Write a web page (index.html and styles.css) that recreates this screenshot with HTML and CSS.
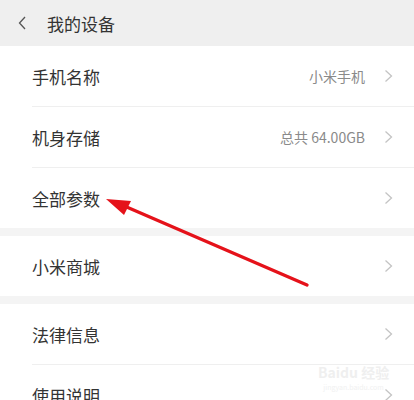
FILE: index.html
```html
<!DOCTYPE html>
<html lang="zh">
<head>
<meta charset="utf-8">
<link rel="stylesheet" href="styles.css">
</head>
<body>
<div class="page">
  <header class="topbar">
    <svg class="back" width="8" height="14" viewBox="0 0 8 14"><path d="M7 1 L1.5 7 L7 13" fill="none" stroke="#555" stroke-width="1.3"/></svg>
    <span class="title">我的设备</span>
  </header>
  <section class="group">
    <div class="row"><span class="label">手机名称</span><span class="value">小米手机</span><svg class="chev" width="9" height="14" viewBox="0 0 9 14"><path d="M1.5 1.5 L7.5 7 L1.5 12.5" fill="none" stroke="#c4c4c4" stroke-width="1.3"/></svg></div>
    <div class="row"><span class="label">机身存储</span><span class="value">总共 64.00GB</span><svg class="chev" width="9" height="14" viewBox="0 0 9 14"><path d="M1.5 1.5 L7.5 7 L1.5 12.5" fill="none" stroke="#c4c4c4" stroke-width="1.3"/></svg></div>
    <div class="row"><span class="label">全部参数</span><span class="value"></span><svg class="chev" width="9" height="14" viewBox="0 0 9 14"><path d="M1.5 1.5 L7.5 7 L1.5 12.5" fill="none" stroke="#c4c4c4" stroke-width="1.3"/></svg></div>
  </section>
  <section class="group">
    <div class="row"><span class="label">小米商城</span><span class="value"></span><svg class="chev" width="9" height="14" viewBox="0 0 9 14"><path d="M1.5 1.5 L7.5 7 L1.5 12.5" fill="none" stroke="#c4c4c4" stroke-width="1.3"/></svg></div>
  </section>
  <section class="group">
    <div class="row"><span class="label">法律信息</span><span class="value"></span><svg class="chev" width="9" height="14" viewBox="0 0 9 14"><path d="M1.5 1.5 L7.5 7 L1.5 12.5" fill="none" stroke="#c4c4c4" stroke-width="1.3"/></svg></div>
    <div class="row"><span class="label">使用说明</span><span class="value"></span><svg class="chev" width="9" height="14" viewBox="0 0 9 14"><path d="M1.5 1.5 L7.5 7 L1.5 12.5" fill="none" stroke="#c4c4c4" stroke-width="1.3"/></svg></div>
  </section>
  <div class="watermark"><div class="wm1">Bai<span>du</span> 经验</div><div class="wm2">jingyan.baidu.com</div></div>
  <svg class="annot" width="414" height="400" viewBox="0 0 414 400">
    <line x1="122" y1="205" x2="307" y2="285" stroke="#e5121a" stroke-width="3.3" stroke-linecap="round"/>
    <polygon points="106,199 131,201 124,215" fill="#e5121a"/>
  </svg>
</div>
</body>
</html>
```
FILE: styles.css
```css
html, body {
  margin: 0;
  padding: 0;
  background: #ffffff;
}
body {
  font-family: "Noto Sans CJK SC", "Noto Sans", "Liberation Sans", sans-serif;
  color: #333333;
}
.page {
  position: relative;
  width: 414px;
  height: 400px;
  overflow: hidden;
  background: #ffffff;
}
.topbar {
  height: 46px;
  background: #efefef;
  display: flex;
  align-items: center;
  padding-left: 18px;
  box-sizing: border-box;
}
.back {
  display: block;
}
.title {
  margin-left: 21px;
  font-size: 17px;
  color: #333;
  line-height: 1;
}
.group {
  background: #fff;
}
.group + .group {
  border-top: 8px solid #f4f4f4;
}
.row {
  height: 60px;
  display: flex;
  align-items: center;
  margin-left: 32px;
  padding-right: 21px;
}
.row + .row {
  border-top: 1px solid #efefef;
}
.label {
  font-size: 17px;
  color: #333;
  flex: 1;
  line-height: 1;
}
.value {
  font-size: 14px;
  color: #8a8a8a;
  margin-right: 19px;
  line-height: 1;
}
.chev {
  display: block;
}
.watermark {
  position: absolute;
  left: 318px;
  top: 362px;
  color: #efefef;
  text-align: center;
}
.wm1 {
  font-size: 14px;
  font-weight: bold;
}
.wm2 {
  font-size: 7px;
  color: #f1f1f1;
}
.annot {
  position: absolute;
  left: 0;
  top: 0;
  pointer-events: none;
}
```
